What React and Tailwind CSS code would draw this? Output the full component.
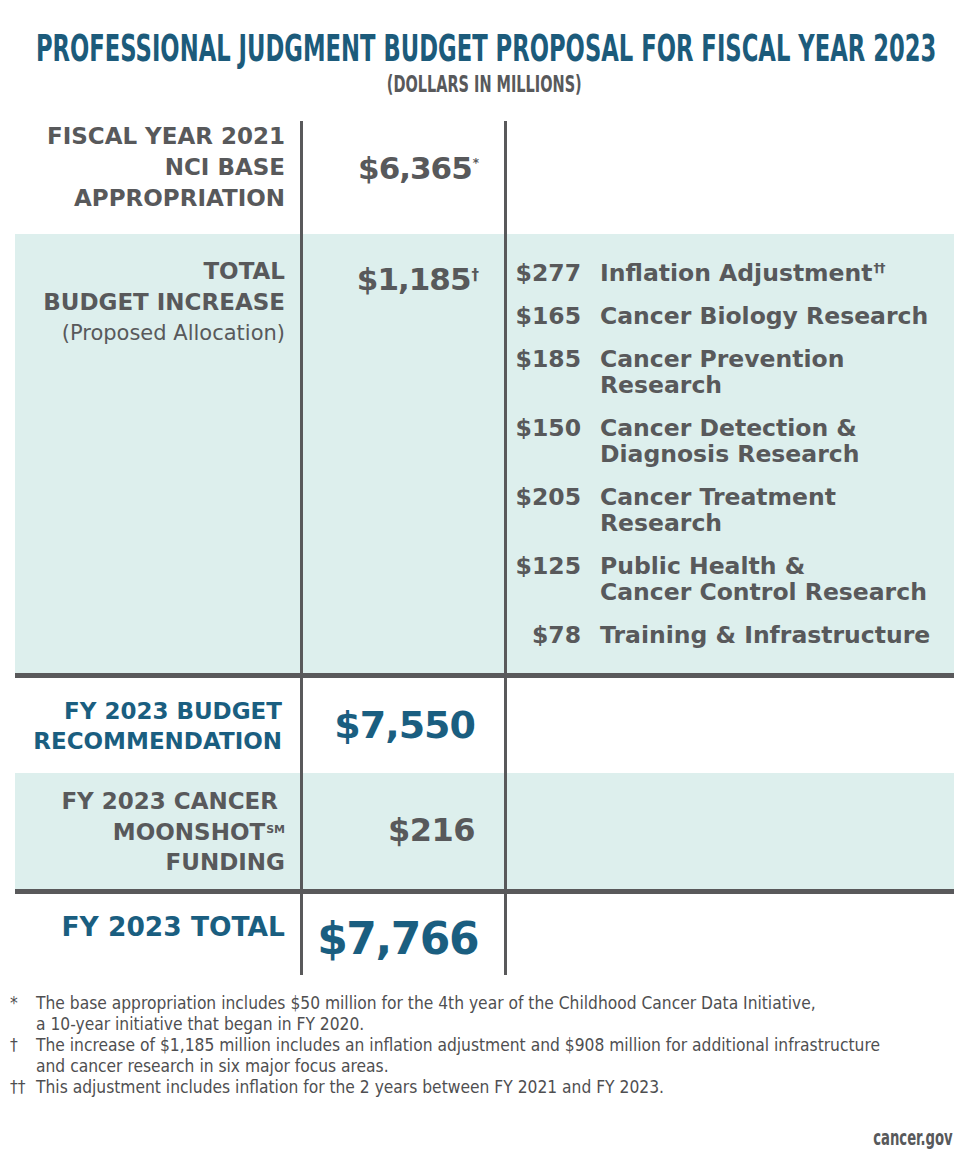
const line = "border-l-[3px] border-[#59595b]";
const cond = "font-['Liberation_Sans_Narrow','DejaVu_Sans_Condensed',sans-serif]";

const allocations = [
  { amt: "$277", lines: ["Inflation Adjustment"], sup: "††" },
  { amt: "$165", lines: ["Cancer Biology Research"] },
  { amt: "$185", lines: ["Cancer Prevention", "Research"] },
  { amt: "$150", lines: ["Cancer Detection &", "Diagnosis Research"] },
  { amt: "$205", lines: ["Cancer Treatment", "Research"] },
  { amt: "$125", lines: ["Public Health &", "Cancer Control Research"] },
  { amt: "$78", lines: ["Training & Infrastructure"] },
];

const Row = ({ bg = "", left, mid, right, h }) => (
  <div className={`grid grid-cols-[285px_204px_449px] ${bg} ${h}`}>
    <div className="pr-[15px] text-right">{left}</div>
    <div className={`${line} pr-[26px] text-right`}>{mid}</div>
    <div className={line}>{right}</div>
  </div>
);

const Rule = () => <div className="h-[5px] bg-[#59595b]" />;

export default function App() {
  return (
    <div className="w-[969px] min-h-[1171px] overflow-hidden bg-white font-['DejaVu_Sans',sans-serif] text-[#58595b]">
      {/* Title */}
      <header className="pt-[29px]">
        <div className="flex justify-center pl-[3px]">
          <h1 className={`${cond} shrink-0 whitespace-nowrap scale-x-[0.682] font-bold text-[37px] leading-[40px] text-[#1c5b7b]`}>
            PROFESSIONAL JUDGMENT BUDGET PROPOSAL FOR FISCAL YEAR 2023
          </h1>
        </div>
        <div className="flex justify-center mt-[2px]">
          <p className={`${cond} shrink-0 whitespace-nowrap scale-x-[0.7] text-[23px] leading-[26px] font-bold text-[#58595b]`}>
            (DOLLARS IN MILLIONS)
          </p>
        </div>
      </header>

      {/* Table */}
      <div className="mx-[15px] mt-[24px]">
        <Row
          h="h-[113px]"
          left={
            <div className="text-[23px] leading-[31px] font-bold">
              FISCAL YEAR 2021
              <br />
              NCI BASE
              <br />
              APPROPRIATION
            </div>
          }
          mid={
            <div className="pt-[27px] text-[31px] leading-[40px] font-bold tracking-[-1px]">
              $6,365<span className="relative -top-[12px] ml-[1px] text-[12px] leading-none">*</span>
            </div>
          }
        />

        <Row
          bg="bg-[#ddefed]"
          h="h-[439px]"
          left={
            <div className="pt-[22px] leading-[31px]">
              <div className="text-[23px] font-bold">TOTAL</div>
              <div className="text-[23px] font-bold">BUDGET INCREASE</div>
              <div className="text-[21px]">(Proposed Allocation)</div>
            </div>
          }
          mid={
            <div className="pt-[25px] text-[31px] leading-[40px] font-bold tracking-[-1px]">
              $1,185<span className="relative -top-[10px] ml-[1px] text-[15px] leading-none">†</span>
            </div>
          }
          right={
            <div className="pt-[26px] flex flex-col gap-[17px] text-[23.5px] leading-[26px] font-bold">
              {allocations.map((a) => (
                <div key={a.amt} className="flex">
                  <div className="w-[74px] shrink-0 text-right">{a.amt}</div>
                  <div className="ml-[19px]">
                    {a.lines.map((l, i) => (
                      <div key={i}>
                        {l}
                        {a.sup && (
                          <span className="relative -top-[9px] ml-[1px] text-[13px] leading-none tracking-[-1px]">
                            {a.sup}
                          </span>
                        )}
                      </div>
                    ))}
                  </div>
                </div>
              ))}
            </div>
          }
        />

        <Rule />

        <Row
          h="h-[95px]"
          left={
            <div className="pt-[18px] pr-[3px] text-[23px] leading-[30px] font-bold text-[#1a5e80]">
              FY 2023 BUDGET
              <br />
              RECOMMENDATION
            </div>
          }
          mid={
            <div className="pt-[25px] pr-[3px] text-[38px] leading-[44px] font-bold tracking-[-1px] text-[#1a5e80]">
              $7,550
            </div>
          }
        />

        <Row
          bg="bg-[#ddefed]"
          h="h-[116px]"
          left={
            <div className="pt-[13px] text-[23px] leading-[30.5px] font-bold">
              <div className="pr-[7px]">FY 2023 CANCER</div>
              <div>
                MOONSHOT<span className="relative -top-[7px] ml-[1px] text-[11px] leading-none">SM</span>
              </div>
              <div>FUNDING</div>
            </div>
          }
          mid={
            <div className="pt-[37px] pr-[3px] text-[32px] leading-[40px] font-bold tracking-[-0.5px]">
              $216
            </div>
          }
        />

        <Rule />

        <Row
          h="h-[81px]"
          left={
            <div className="pt-[18px] text-[26.5px] leading-[30px] font-bold text-[#1a5e80]">
              FY 2023 TOTAL
            </div>
          }
          mid={
            <div className="pt-[20px] pr-0 text-[44px] leading-[50px] font-bold tracking-[-1.5px] text-[#1a5e80]">
              $7,766
            </div>
          }
        />
      </div>

      {/* Footnotes */}
      <div className={`${cond} mt-[18px] pl-[10px] text-[17.25px] leading-[21px] text-[#4f4f51]`}>
        <div className="flex">
          <span className="w-[26px] shrink-0">*</span>
          <p>
            The base appropriation includes $50 million for the 4th year of the Childhood Cancer Data Initiative,
            <br />
            a 10-year initiative that began in FY 2020.
          </p>
        </div>
        <div className="flex">
          <span className="w-[26px] shrink-0">†</span>
          <p>
            The increase of $1,185 million includes an inflation adjustment and $908 million for additional infrastructure
            <br />
            and cancer research in six major focus areas.
          </p>
        </div>
        <div className="flex">
          <span className="w-[26px] shrink-0">††</span>
          <p>This adjustment includes inflation for the 2 years between FY 2021 and FY 2023.</p>
        </div>
      </div>

      <div className="mt-[28px] pr-[16px] flex justify-end">
        <span className={`${cond} origin-right scale-x-[0.7] text-[21px] leading-[24px] font-bold text-[#58595b]`}>
          cancer.gov
        </span>
      </div>
    </div>
  );
}
